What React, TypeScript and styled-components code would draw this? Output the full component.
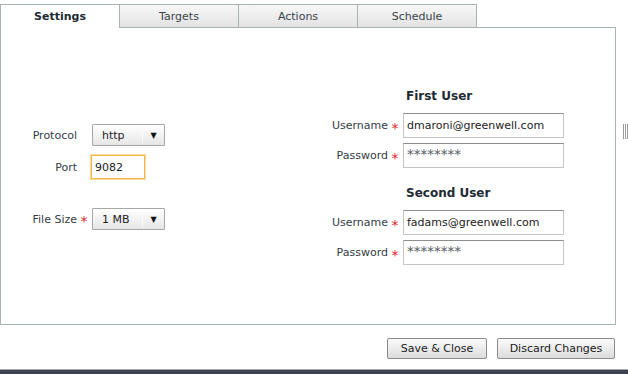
import React from "react";
import styled, { createGlobalStyle } from "styled-components";

const Global = createGlobalStyle`
  html, body { margin: 0; padding: 0; background: #fff; }
  body { font-family: "DejaVu Sans", Verdana, sans-serif; font-size: 11px; color: #333d44; }
  * { box-sizing: border-box; }
`;

const Page = styled.div`
  width: 628px;
  height: 374px;
  display: flex;
  flex-direction: column;
  background: #fff;
  overflow: hidden;
`;

const Main = styled.div`
  display: flex;
  align-items: flex-start;
`;

const Window = styled.div`
  width: 616px;
  display: flex;
  flex-direction: column;
`;

const TabBar = styled.div`
  display: flex;
  margin-top: 4px;
  height: 24px;
`;

const Tab = styled.div<{ $active?: boolean; $first?: boolean }>`
  width: ${(p) => (p.$first ? 120 : 119)}px;
  height: 24px;
  border-top: 1px solid #aab3b3;
  border-right: 1px solid #aab3b3;
  border-left: ${(p) => (p.$first ? "1px solid #aab3b3" : "none")};
  border-bottom: ${(p) => (p.$active ? "none" : "1px solid #aab3b3")};
  background: ${(p) => (p.$active ? "#fff" : "linear-gradient(#f7f7f7, #e3e3e3)")};
  color: ${(p) => (p.$active ? "#1d2a32" : "#3a444a")};
  font-weight: ${(p) => (p.$active ? "bold" : "normal")};
  display: flex;
  justify-content: center;
  padding-top: 5px;
  line-height: 14px;
`;

const TabFiller = styled.div`
  flex: 1;
  border-bottom: 1px solid #aab3b3;
`;

const Panel = styled.div`
  height: 297px;
  border-left: 1px solid #aab3b3;
  border-right: 1px solid #aab3b3;
  border-bottom: 1px solid #aab3b3;
  display: flex;
`;

const LeftCol = styled.div`
  width: 300px;
  padding-top: 96px;
  display: flex;
  flex-direction: column;
`;

const RightCol = styled.div`
  flex: 1;
  padding-top: 60px;
  display: flex;
  flex-direction: column;
`;

const Row = styled.div<{ $labelW: number; $mt?: number; $h?: number }>`
  display: grid;
  grid-template-columns: ${(p) => p.$labelW}px 15px auto;
  align-items: center;
  height: ${(p) => p.$h ?? 24}px;
  margin-top: ${(p) => p.$mt ?? 0}px;
`;

const Label = styled.span`
  text-align: right;
  color: #333d44;
  white-space: nowrap;
`;

const Req = styled.span`
  color: #d9262c;
  font-size: 14px;
  text-align: center;
  line-height: 10px;
  padding-top: 4px;
  padding-right: 1px;
`;

const Heading = styled.div<{ $mt: number }>`
  margin-top: ${(p) => p.$mt}px;
  margin-left: 105px;
  font-weight: bold;
  font-size: 12px;
  color: #1d2a32;
  line-height: 16px;
  height: 16px;
  margin-bottom: 9px;
`;

const Select = styled.div`
  width: 73px;
  height: 22px;
  border: 1px solid #a7a7a7;
  border-radius: 1px;
  background: linear-gradient(#ffffff, #e6e6e6);
  display: flex;
  align-items: center;
  color: #222;
`;

const SelectText = styled.span`
  flex: 1;
  padding-left: 9px;
`;

const SelectArrow = styled.span`
  width: 22px;
  height: 16px;
  border-left: 1px solid #fafafa;
  display: flex;
  align-items: center;
  justify-content: center;
  font-size: 8px;
  color: #111;
`;

const TextInput = styled.div<{ $w: number; $focus?: boolean; $pw?: boolean }>`
  width: ${(p) => p.$w}px;
  height: ${(p) => (p.$focus ? 24 : 25)}px;
  margin-left: ${(p) => (p.$focus ? -1 : 0)}px;
  border: 1px solid ${(p) => (p.$focus ? "#f1b84c" : "#c4c4c4")};
  border-top-color: ${(p) => (p.$focus ? "#f1b84c" : "#8e8e8e")};
  box-shadow: ${(p) => (p.$focus ? "0 0 0 1px #fbd99a" : "none")};
  background: #fff;
  padding-left: 3px;
  display: flex;
  align-items: ${(p) => (p.$pw ? "flex-start" : "center")};
  padding-top: ${(p) => (p.$pw ? 2 : 0)}px;
  color: ${(p) => (p.$pw ? "#5a6166" : "#222")};
  font-size: ${(p) => (p.$pw ? 13.5 : 11)}px;
  line-height: ${(p) => (p.$pw ? "16px" : "normal")};
`;

const Grip = styled.div`
  margin-left: 7px;
  margin-top: 124px;
  width: 5px;
  height: 15px;
  border-left: 1px solid #9a9a9a;
  border-right: 1px solid #9a9a9a;
  display: flex;
  justify-content: center;
  &::after {
    content: "";
    width: 1px;
    background: #9a9a9a;
  }
`;

const Footer = styled.div`
  display: flex;
  justify-content: flex-end;
  gap: 10px;
  padding-top: 13px;
  padding-right: 13px;
`;

const Button = styled.button<{ $w: number }>`
  width: ${(p) => p.$w}px;
  height: 21px;
  border: 1px solid #8a8a8a;
  border-radius: 2px;
  background: linear-gradient(#fbfbfb, #dcdcdc);
  font-family: "DejaVu Sans", Verdana, sans-serif;
  font-size: 11px;
  color: #222;
  padding: 0;
`;

const Spacer = styled.div`
  flex: 1;
`;

const BottomBar = styled.div`
  height: 5px;
  border-top: 1px solid #a3a7ae;
  background: #3d4250;
`;

export default function App() {
  return (
    <>
      <Global />
      <Page>
        <Main>
          <Window>
            <TabBar>
              <Tab $active $first>Settings</Tab>
              <Tab>Targets</Tab>
              <Tab>Actions</Tab>
              <Tab>Schedule</Tab>
              <TabFiller />
            </TabBar>
            <Panel>
              <LeftCol>
                <Row $labelW={76} $h={22}>
                  <Label>Protocol</Label>
                  <span />
                  <Select>
                    <SelectText>http</SelectText>
                    <SelectArrow>▼</SelectArrow>
                  </Select>
                </Row>
                <Row $labelW={76} $mt={9}>
                  <Label>Port</Label>
                  <span />
                  <TextInput $w={54} $focus>9082</TextInput>
                </Row>
                <Row $labelW={76} $mt={29} $h={22}>
                  <Label>File Size</Label>
                  <Req>*</Req>
                  <Select>
                    <SelectText>1 MB</SelectText>
                    <SelectArrow>▼</SelectArrow>
                  </Select>
                </Row>
              </LeftCol>
              <RightCol>
                <Heading $mt={0}>First User</Heading>
                <Row $labelW={87} $h={25}>
                  <Label>Username</Label>
                  <Req>*</Req>
                  <TextInput $w={161}>dmaroni@greenwell.com</TextInput>
                </Row>
                <Row $labelW={87} $h={25} $mt={5}>
                  <Label>Password</Label>
                  <Req>*</Req>
                  <TextInput $w={161} $pw>********</TextInput>
                </Row>
                <Heading $mt={17}>Second User</Heading>
                <Row $labelW={87} $h={25}>
                  <Label>Username</Label>
                  <Req>*</Req>
                  <TextInput $w={161}>fadams@greenwell.com</TextInput>
                </Row>
                <Row $labelW={87} $h={25} $mt={5}>
                  <Label>Password</Label>
                  <Req>*</Req>
                  <TextInput $w={161} $pw>********</TextInput>
                </Row>
              </RightCol>
            </Panel>
          </Window>
          <Grip />
        </Main>
        <Footer>
          <Button $w={100}>Save &amp; Close</Button>
          <Button $w={118}>Discard Changes</Button>
        </Footer>
        <Spacer />
        <BottomBar />
      </Page>
    </>
  );
}
